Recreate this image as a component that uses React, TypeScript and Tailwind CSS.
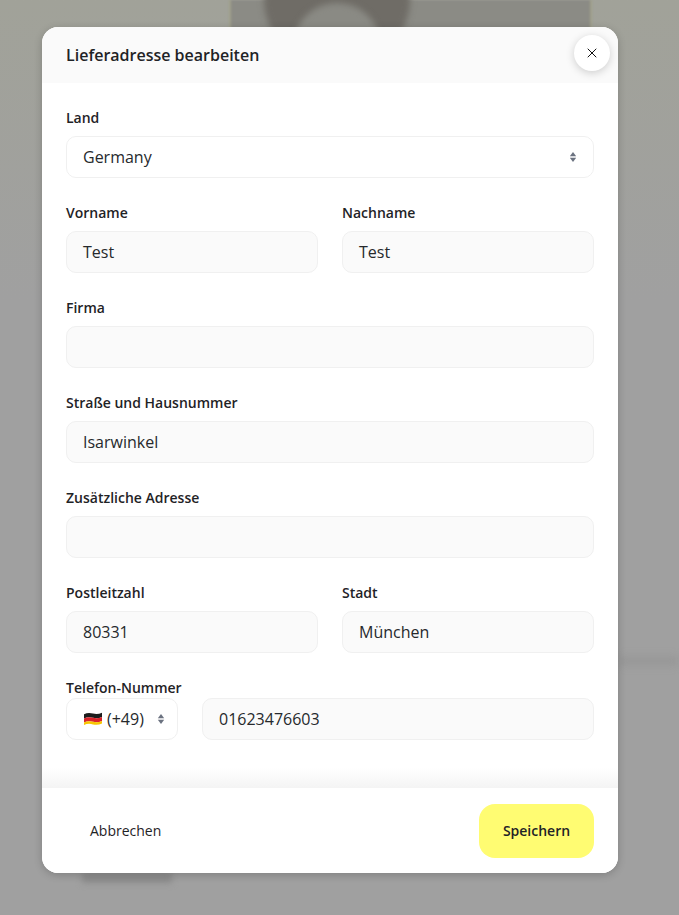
import { FC } from "react";
import { X } from "lucide-react";

const Chevrons: FC = () => (
  <svg width="8" height="12" viewBox="0 0 8 12" className="shrink-0 text-[#6b7280]">
    <path d="M4 1 L7.2 5.2 H0.8 Z" fill="currentColor" />
    <path d="M4 11 L7.2 6.8 H0.8 Z" fill="currentColor" />
  </svg>
);

const Flag: FC = () => (
  <svg width="20" height="16" viewBox="0 0 20 16" className="shrink-0">
    <path d="M1 3.2 C4 1.8 7 1.8 10 2.6 C13 3.4 16 3.2 19 1.8 V6 C16 7.4 13 7.6 10 6.8 C7 6 4 6 1 7.4 Z" fill="#1c1c1c" />
    <path d="M1 7.4 C4 6 7 6 10 6.8 C13 7.6 16 7.4 19 6 V10 C16 11.4 13 11.6 10 10.8 C7 10 4 10 1 11.4 Z" fill="#d8232a" />
    <path d="M1 11.4 C4 10 7 10 10 10.8 C13 11.6 16 11.4 19 10 V12.6 C16 14 13 14.2 10 13.4 C7 12.6 4 12.6 1 14 Z" fill="#f7c600" />
  </svg>
);

const Field: FC<{ label: string; value?: string; half?: boolean }> = ({ label, value, half }) => (
  <div className={half ? "flex w-[252px] flex-col" : "flex flex-col"}>
    <label className="mb-2 h-[20px] text-sm leading-5 font-semibold text-[#1f2326]">{label}</label>
    <div className="flex h-[42px] items-center rounded-[10px] border border-[#f0f0f0] bg-[#fafafa] px-4 text-base text-[#26292c]">
      {value}
    </div>
  </div>
);

const App: FC = () => {
  return (
    <div className="relative h-[915px] w-[679px] overflow-hidden bg-[#a0a0a0] font-['Open_Sans',sans-serif]">
      {/* blurred page behind the overlay */}
      <div className="absolute inset-x-0 top-0 h-[300px] bg-gradient-to-b from-[#a1a299] to-[#a0a0a0]" />
      <div className="absolute top-0 left-[229px] h-[60px] w-[363px] border-x-2 border-[#a0a18a] bg-[#8b8b85] blur-[1px]" />
      <div className="absolute -top-[30px] left-[264px] h-[90px] w-[146px] rounded-b-[60px] bg-[#6f6c66] blur-[3px]" />
      <div className="absolute top-[3px] left-[293px] h-[60px] w-[88px] rounded-t-full bg-[#8a8a84] blur-[3px]" />
      <div className="absolute top-[657px] left-[618px] h-[8px] w-[61px] bg-[#969696] blur-[4px]" />
      <div className="absolute top-[873px] left-[82px] h-[10px] w-[90px] bg-[#8a8a8a] blur-[3px]" />

      <div className="relative mx-[42px] mt-[27px] flex h-[846px] w-[576px] flex-col overflow-hidden rounded-2xl bg-white shadow-[0_2px_8px_rgba(0,0,0,0.2)]">
        <div className="flex h-[56px] shrink-0 items-center bg-[#fafafa] px-6">
          <h2 className="text-base font-semibold text-[#1f2326]">Lieferadresse bearbeiten</h2>
        </div>

        <div className="absolute top-[8px] right-[8px] flex h-9 w-9 items-center justify-center rounded-full bg-white shadow-[0_2px_8px_rgba(0,0,0,0.18)]">
          <X size={16} strokeWidth={1.5} className="text-[#111111]" />
        </div>

        <div className="flex flex-1 flex-col gap-[25px] px-6 pt-[25px]">
          <div className="flex flex-col">
            <label className="mb-2 h-[20px] text-sm leading-5 font-semibold text-[#1f2326]">Land</label>
            <div className="flex h-[42px] items-center justify-between rounded-[10px] border border-[#f0f0f0] bg-white pr-4 pl-4 text-base text-[#26292c]">
              <span>Germany</span>
              <Chevrons />
            </div>
          </div>

          <div className="flex gap-6">
            <Field half label="Vorname" value="Test" />
            <Field half label="Nachname" value="Test" />
          </div>

          <Field label="Firma" />
          <Field label="Straße und Hausnummer" value="Isarwinkel" />
          <Field label="Zusätzliche Adresse" />

          <div className="flex gap-6">
            <Field half label="Postleitzahl" value="80331" />
            <Field half label="Stadt" value="München" />
          </div>

          <div className="flex flex-col">
            <label className="h-[20px] text-sm leading-5 font-semibold text-[#1f2326]">Telefon-Nummer</label>
            <div className="flex gap-6">
              <div className="flex h-[42px] w-[112px] shrink-0 items-center justify-between rounded-[10px] border border-[#f0f0f0] bg-white pr-3 pl-4 text-base text-[#26292c]">
                <span className="flex items-center gap-[4px]">
                  <Flag />
                  (+49)
                </span>
                <Chevrons />
              </div>
              <div className="flex h-[42px] flex-1 items-center rounded-[10px] border border-[#f0f0f0] bg-[#fafafa] px-4 text-base text-[#26292c]">
                01623476603
              </div>
            </div>
          </div>
        </div>

        <div className="h-[20px] shrink-0 bg-gradient-to-b from-white to-[#f4f4f4]" />
        <div className="flex h-[85px] shrink-0 items-center justify-between bg-white px-6">
          <button className="px-6 text-sm text-[#1f2326]">Abbrechen</button>
          <button className="h-[54px] w-[115px] rounded-2xl bg-[#fffc72] text-sm font-semibold text-[#1f2326]">
            Speichern
          </button>
        </div>
      </div>
    </div>
  );
};

export default App;
